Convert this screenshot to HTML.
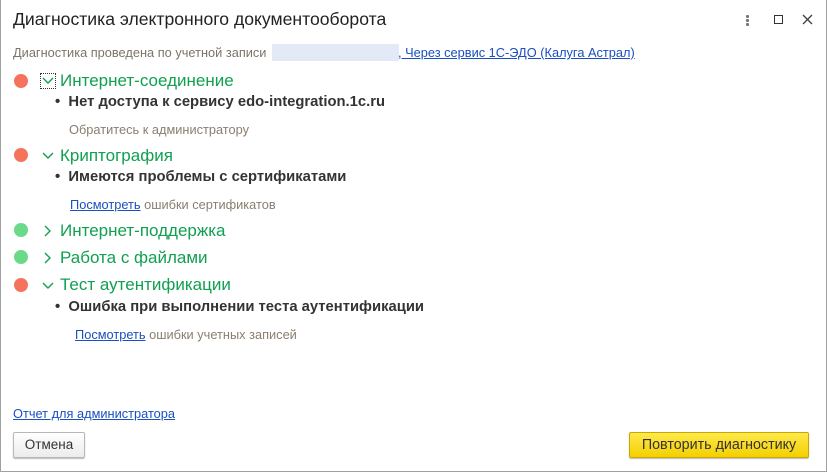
<!DOCTYPE html>
<html><head><meta charset="utf-8"><style>
*{margin:0;padding:0;box-sizing:border-box}
body{width:827px;height:472px;background:#fff;font-family:"Liberation Sans",sans-serif;position:relative;overflow:hidden}
.frame{position:absolute;left:0;top:0;width:827px;height:472px;border:1px solid #a0a0a0;border-top:none}
.a{position:absolute;white-space:nowrap}
.dot{position:absolute;width:14px;height:14px;border-radius:50%}
.r{background:#f5735d}.g{background:#6bd98a}
.grn{color:#10a050;font-size:17px}
.b{font-weight:bold;font-size:14.8px;color:#333}
.h{font-size:12.8px;color:#8a7e70}
.lnk{color:#1a4fc0;text-decoration:underline}
.chev{position:absolute}
.md{position:absolute;left:746px;width:3px;height:3px;background:#777;border-radius:1px}
</style></head><body>
<div class="frame"></div>
<div class="a" style="left:13px;top:9px;font-size:17.6px;color:#222">Диагностика электронного документооборота</div>
<div class="md" style="top:15px"></div><div class="md" style="top:19px"></div><div class="md" style="top:23px"></div>
<div class="a" style="left:774px;top:15px;width:9px;height:9px;border:1.5px solid #333"></div>
<svg class="a" style="left:802px;top:14px" width="11" height="11"><path d="M1 1L10 10M10 1L1 10" stroke="#444" stroke-width="1.4"/></svg>
<div class="a h" style="left:13px;top:45px;color:#7d7468">Диагностика проведена по учетной записи</div>
<div class="a" style="left:272px;top:44px;width:127px;height:17px;background:#e3e9f7"></div>
<div class="a h lnk" style="left:398px;top:45px">, Через сервис 1С-ЭДО (Калуга Астрал)</div>

<div class="dot r" style="left:14px;top:74px"></div>
<div class="a" style="left:40px;top:73px;width:16px;height:16px;border:1px dotted #333"></div>
<svg class="chev" style="left:42px;top:77px" width="12" height="8"><path d="M1 1L6 6L11 1" fill="none" stroke="#10a050" stroke-width="1.4"/></svg>
<div class="a grn" style="left:60px;top:71px">Интернет-соединение</div>
<div class="a b" style="left:55px;top:94px">•&nbsp;&nbsp;Нет доступа к сервису edo-integration.1c.ru</div>
<div class="a h" style="left:69px;top:122px">Обратитесь к администратору</div>

<div class="dot r" style="left:14px;top:148px"></div>
<svg class="chev" style="left:42px;top:152px" width="12" height="8"><path d="M1 1L6 6L11 1" fill="none" stroke="#10a050" stroke-width="1.4"/></svg>
<div class="a grn" style="left:60px;top:146px">Криптография</div>
<div class="a b" style="left:55px;top:169px">•&nbsp;&nbsp;Имеются проблемы с сертификатами</div>
<div class="a h" style="left:70px;top:197px"><span class="lnk">Посмотреть</span> ошибки сертификатов</div>

<div class="dot g" style="left:14px;top:223px"></div>
<svg class="chev" style="left:44px;top:225px" width="8" height="12"><path d="M1 1L6 6L1 11" fill="none" stroke="#10a050" stroke-width="1.4"/></svg>
<div class="a grn" style="left:60px;top:221px">Интернет-поддержка</div>

<div class="dot g" style="left:14px;top:250px"></div>
<svg class="chev" style="left:44px;top:252px" width="8" height="12"><path d="M1 1L6 6L1 11" fill="none" stroke="#10a050" stroke-width="1.4"/></svg>
<div class="a grn" style="left:60px;top:248px">Работа с файлами</div>

<div class="dot r" style="left:14px;top:278px"></div>
<svg class="chev" style="left:42px;top:282px" width="12" height="8"><path d="M1 1L6 6L11 1" fill="none" stroke="#10a050" stroke-width="1.4"/></svg>
<div class="a grn" style="left:60px;top:275px">Тест аутентификации</div>
<div class="a b" style="left:55px;top:299px">•&nbsp;&nbsp;Ошибка при выполнении теста аутентификации</div>
<div class="a h" style="left:75px;top:327px"><span class="lnk">Посмотреть</span> ошибки учетных записей</div>

<div class="a h lnk" style="left:13px;top:406px">Отчет для администратора</div>
<div class="a" style="left:13px;top:432px;width:72px;height:26px;border:1px solid #b8b8b8;border-radius:2px;background:linear-gradient(#fff,#ececec);box-shadow:0 1px 1px #bbb;font-size:13.5px;color:#333;text-align:center;line-height:24px">Отмена</div>
<div class="a" style="left:629px;top:432px;width:180px;height:26px;border:1px solid #c9a800;border-radius:2px;background:linear-gradient(#ffe94a,#f4cf00);box-shadow:0 1px 1px #bbb;font-size:14.3px;color:#333;text-align:center;line-height:24px">Повторить диагностику</div>
</body></html>
